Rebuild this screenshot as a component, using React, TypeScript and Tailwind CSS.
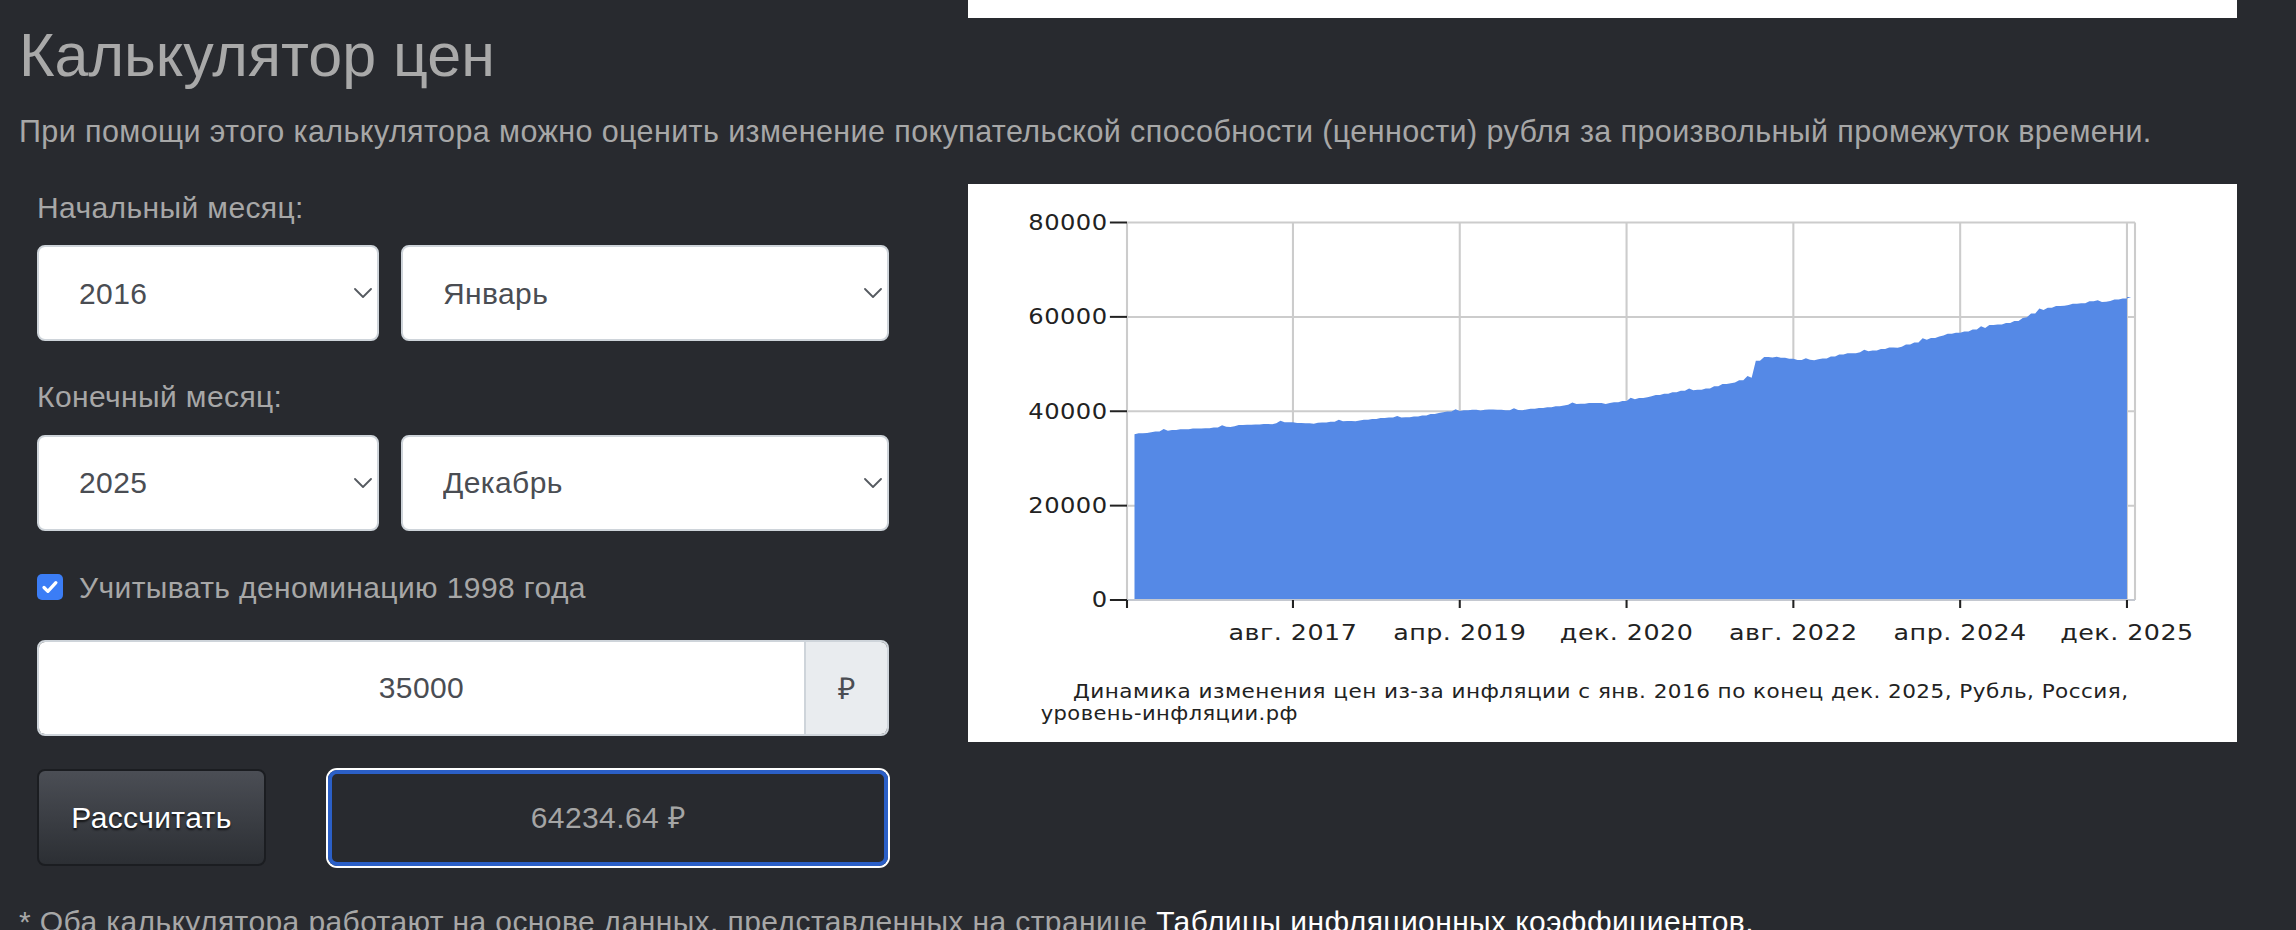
// monthly CPI change, % (jan 2016 .. dec 2025)
const RATES = [
  1.0, 0.6, 0.5, 0.4, 0.4, 0.4, 0.5, 0.0, 0.2, 0.4, 0.4, 0.4,
  0.6, 0.2, 0.1, 0.3, 0.4, 0.6, 0.1, -0.5, -0.1, 0.2, 0.2, 0.4,
  0.3, 0.2, 0.3, 0.4, 0.4, 0.5, 0.3, 0.0, 0.2, 0.4, 0.5, 0.8,
  1.0, 0.4, 0.3, 0.3, 0.3, 0.0, 0.2, -0.2, -0.2, 0.1, 0.3, 0.4,
  0.4, 0.3, 0.6, 0.8, 0.3, 0.2, 0.4, 0.0, -0.1, 0.4, 0.7, 0.8,
  0.7, 0.8, 0.7, 0.6, 0.7, 0.7, 0.3, 0.2, 0.6, 1.1, 1.0, 0.8,
  1.0, 1.2, 7.6, 1.6, 0.1, -0.4, -0.4, -0.5, 0.05, 0.2, 0.4, 0.8,
  0.8, 0.5, 0.4, 0.4, 0.3, 0.6, 0.6, 0.3, 0.9, 0.8, 1.1, 0.7,
  0.9, 0.7, 0.4, 0.5, 0.7, 0.6, 1.1, 0.2, 0.5, 0.7, 1.4, 1.3,
  1.2, 0.8, 0.6, 0.4, 0.4, 0.2, 0.6, -0.2, 0.3, 0.5, 0.4, 0.5,
]

const START = 35000
const RESULT = 64234.64

function buildSeries() {
  let v = START
  const raw = RATES.map((r) => (v *= 1 + r / 100))
  const k = (RESULT - START) / (raw[raw.length - 1]! - START)
  return raw.map((x) => START + (x - START) * k)
}

// chart geometry, in svg units (image is stretched horizontally)
const S = 1269 / 1100
const PLOT_L = 159 / S
const PLOT_R = 1167 / S
const TOP = 38.5
const BOTTOM = 416
const xm = (m: number) => (166.5 + 8.34 * m) / S
const yv = (v: number) => BOTTOM - (v / 80000) * (BOTTOM - TOP)

const X_LABELS = [
  { m: 19, t: 'авг. 2017' },
  { m: 39, t: 'апр. 2019' },
  { m: 59, t: 'дек. 2020' },
  { m: 79, t: 'авг. 2022' },
  { m: 99, t: 'апр. 2024' },
  { m: 119, t: 'дек. 2025' },
]

function InflationChart() {
  const series = buildSeries()
  let d = `M ${xm(0)} ${BOTTOM} L ${xm(0)} ${yv(START * 1.003)}`
  series.forEach((v, i) => {
    // a little jitter so the edge looks like daily data
    const j = i % 7 === 3 ? 1.6 : i % 5 === 1 ? -0.8 : 0
    d += ` L ${xm(i + 0.5)} ${yv(v) - j} L ${xm(Math.min(i + 1, 119))} ${yv(v)}`
  })
  d += ` L ${xm(119)} ${BOTTOM} Z`

  return (
    <div className="h-[558px] w-[1269px] shrink-0 bg-white">
      <svg viewBox="0 0 1100 558" preserveAspectRatio="none" className="h-full w-full">
        {/* grid */}
        {[20000, 40000, 60000, 80000].map((v) => (
          <line key={v} x1={PLOT_L} x2={PLOT_R} y1={yv(v)} y2={yv(v)} stroke="#cccccc" strokeWidth={2} />
        ))}
        {X_LABELS.map((l) => (
          <line key={l.m} x1={xm(l.m)} x2={xm(l.m)} y1={TOP} y2={BOTTOM} stroke="#cccccc" strokeWidth={1.8} />
        ))}
        <line x1={PLOT_L} x2={PLOT_L} y1={TOP} y2={BOTTOM} stroke="#cccccc" strokeWidth={1.8} />
        <line x1={PLOT_R} x2={PLOT_R} y1={TOP} y2={BOTTOM} stroke="#cccccc" strokeWidth={1.8} />

        <path d={d} fill="#5589e6" />
        <line x1={PLOT_L} x2={PLOT_R} y1={BOTTOM} y2={BOTTOM} stroke="#c4c8d0" strokeWidth={2} />

        {/* y axis */}
        {[0, 20000, 40000, 60000, 80000].map((v) => (
          <g key={v}>
            <line x1={123} x2={PLOT_L} y1={yv(v)} y2={yv(v)} stroke="#222" strokeWidth={2} />
            <text x={121} y={yv(v) + 7.5} textAnchor="end" fontSize={21} fill="#222" fontFamily="DejaVu Sans, sans-serif">
              {v}
            </text>
          </g>
        ))}

        {/* x axis */}
        <line x1={PLOT_L} x2={PLOT_L} y1={BOTTOM} y2={BOTTOM + 8} stroke="#222" strokeWidth={1.8} />
        {X_LABELS.map((l) => (
          <g key={l.t}>
            <line x1={xm(l.m)} x2={xm(l.m)} y1={BOTTOM} y2={BOTTOM + 8} stroke="#222" strokeWidth={1.8} />
            <text x={xm(l.m)} y={456} textAnchor="middle" fontSize={22} fill="#222" fontFamily="DejaVu Sans, sans-serif">
              {l.t}
            </text>
          </g>
        ))}

        <text x={91} y={514} fontSize={19} fill="#222" fontFamily="DejaVu Sans, sans-serif" textLength={915} lengthAdjust="spacingAndGlyphs">
          Динамика изменения цен из-за инфляции с янв. 2016 по конец дек. 2025, Рубль, Россия,
        </text>
        <text x={63} y={536} fontSize={19} fill="#222" fontFamily="DejaVu Sans, sans-serif" textLength={223} lengthAdjust="spacingAndGlyphs">
          уровень-инфляции.рф
        </text>
      </svg>
    </div>
  )
}

function SelectBox({ value, className }: { value: string; className: string }) {
  return (
    <div className={`relative h-[96px] ${className}`}>
      <select
        defaultValue={value}
        className="h-full w-full appearance-none rounded-[8px] border-2 border-[#ced4da] bg-white pl-[40px] text-[30px] tracking-[0.4px] text-[#4a4d53] outline-none"
      >
        <option>{value}</option>
      </select>
      <svg
        viewBox="0 0 18 10"
        className="pointer-events-none absolute right-[7px] top-1/2 h-[10px] w-[18px] -translate-y-1/2"
      >
        <path d="M1 1l8 8 8-8" fill="none" stroke="#555a60" strokeWidth={1.8} strokeLinecap="round" strokeLinejoin="round" />
      </svg>
    </div>
  )
}

export default function App() {
  return (
    <div className="h-[930px] overflow-hidden bg-[#282a2f] font-['Liberation_Sans',Arial,sans-serif] tracking-[0.4px] text-[#a7a7a7]">
      {/* tail of previous chart */}
      <div className="ml-[968px] h-[18px] w-[1269px] bg-white" />

      <div className="px-[19px]">
        <h2 className="mt-[1px] text-[61px] leading-[1.2] font-normal tracking-normal text-[#a9a9a9]">Калькулятор цен</h2>
        <p className="mt-[18px] text-[30.5px] leading-[43.5px]">
          При помощи этого калькулятора можно оценить изменение покупательской способности (ценности) рубля за
          произвольный промежуток времени.
        </p>
      </div>

      <div className="mt-[30px] flex items-start pl-[37px]">
        <div className="w-[852px] shrink-0">
          <div className="mt-[2px] text-[30px] leading-[43.5px]">Начальный месяц:</div>
          <div className="mt-[16px] flex gap-[22px]">
            <SelectBox value="2016" className="w-[342px]" />
            <SelectBox value="Январь" className="w-[488px]" />
          </div>

          <div className="mt-[34px] text-[30px] leading-[43.5px]">Конечный месяц:</div>
          <div className="mt-[16px] flex gap-[22px]">
            <SelectBox value="2025" className="w-[342px]" />
            <SelectBox value="Декабрь" className="w-[488px]" />
          </div>

          <label className="mt-[35px] flex h-[43.5px] items-center gap-[16px] text-[30px] leading-[43.5px]">
            <span className="flex h-[26px] w-[26px] items-center justify-center rounded-[5px] bg-[#3b7df6]">
              <svg viewBox="0 0 16 16" className="h-[20px] w-[20px]">
                <path d="M3.2 8.4l3.1 3.1 6.4-7" fill="none" stroke="#fff" strokeWidth={2.6} strokeLinecap="round" strokeLinejoin="round" />
              </svg>
            </span>
            Учитывать деноминацию 1998 года
          </label>

          <div className="mt-[31px] flex h-[96px] overflow-hidden rounded-[8px] border-2 border-[#ced4da]">
            <input
              defaultValue="35000"
              className="h-full min-w-0 flex-1 bg-white text-center text-[30px] tracking-[0.4px] text-[#4a4d53] outline-none"
            />
            <div className="flex w-[83px] items-center justify-center border-l-2 border-[#ced4da] bg-[#e9ecef] text-[30px] text-[#4a4d53]">
              ₽
            </div>
          </div>

          <div className="mt-[33px] flex items-center">
            <button className="h-[97px] w-[229px] rounded-[8px] border-2 border-[#1b1d21] bg-linear-to-b from-[#4b4e55] to-[#2c2f34] text-[30px] tracking-[0.4px] text-white [text-shadow:0_2px_2px_rgba(0,0,0,0.7)]">
              Рассчитать
            </button>
            <div className="ml-[62px] flex h-[96px] w-[560px] items-center justify-center rounded-[9px] border-4 border-[#2b5fc7] text-[30px] text-[#a5a5a5] ring-2 ring-white">
              64234.64 ₽
            </div>
          </div>
        </div>

        <div className="ml-[79px]">
          <InflationChart />
        </div>
      </div>

      <p className="mt-[34px] px-[19px] text-[30px] leading-[43.5px]">
        * Оба калькулятора работают на основе данных, представленных на странице{' '}
        <a className="text-white">Таблицы инфляционных коэффициентов.</a>
      </p>
    </div>
  )
}
